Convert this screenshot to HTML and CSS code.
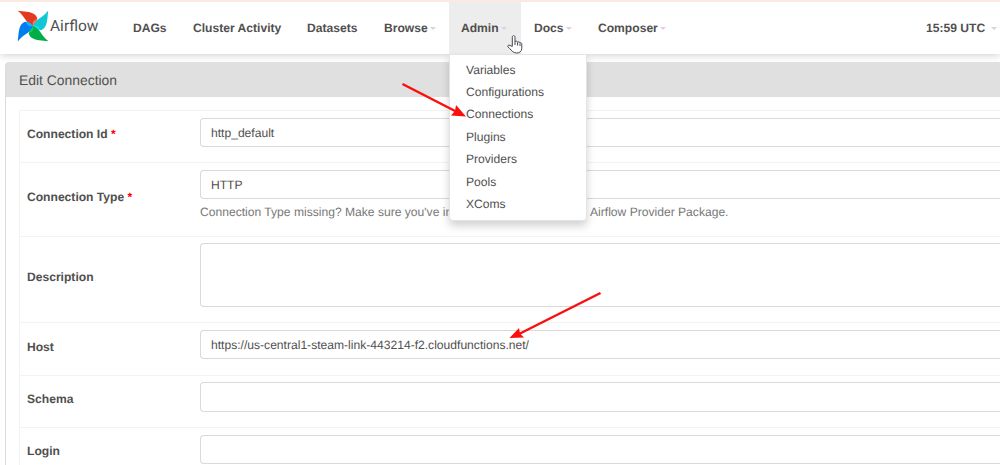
FILE: index.html
```html
<!DOCTYPE html>
<html lang="en">
<head>
<meta charset="utf-8">
<title>Edit Connection - Airflow</title>
<link rel="stylesheet" href="styles.css">
</head>
<body>
<header class="navbar">
  <a class="brand">
    <svg class="pinwheel" viewBox="0 0 32 32" width="32" height="32">
      <defs>
        <path id="blade" d="M.5 .8C7 1.500 13 1.500 17 4C19 5.300 20 7 20.300 9C18 11 17 13.500 16 16C12.500 14.500 10 12 8 9C6 6 4 3.200 .5 .8Z"/>
        <path id="fold" d="M16 16C14.800 12.500 16.500 10 20.300 9C20.500 12 18.500 14.500 16 16Z"/>
      </defs>
      <g><use href="#blade" fill="#e43921"/><use href="#fold" fill="#ff7557"/></g>
      <g transform="rotate(90 16 16)"><use href="#blade" fill="#11c7d4"/><use href="#fold" fill="#11e1ee"/></g>
      <g transform="rotate(180 16 16)"><use href="#blade" fill="#00ad46"/><use href="#fold" fill="#04d659"/></g>
      <g transform="rotate(270 16 16)"><use href="#blade" fill="#017cee"/><use href="#fold" fill="#0cb6ff"/></g>
    </svg>
    <span class="brand-name">Airflow</span>
  </a>
  <nav class="menu">
    <a class="item dags">DAGs</a>
    <a class="item cluster">Cluster Activity</a>
    <a class="item datasets">Datasets</a>
    <a class="item browse">Browse<i class="caret"></i></a>
    <div class="item admin">Admin<i class="caret"></i>
      <ul class="dropdown">
        <li>Variables</li><li>Configurations</li><li>Connections</li><li>Plugins</li><li>Providers</li><li>Pools</li><li>XComs</li>
      </ul>
    </div>
    <a class="item docs">Docs<i class="caret"></i></a>
    <a class="item composer">Composer<i class="caret"></i></a>
  </nav>
  <a class="item clock">15:59 UTC<i class="caret"></i></a>
</header>
<main class="panel">
  <h1 class="panel-title">Edit Connection</h1>
  <form class="form">
    <div class="row id-row"><label>Connection Id <b>*</b></label><div class="field">http_default</div></div>
    <div class="row type-row"><label>Connection Type <b>*</b></label><div><div class="field">HTTP</div><p class="help"><span class="help-start">Connection Type missing? Make sure you've in</span><span>Airflow Provider Package.</span></p></div></div>
    <div class="row description-row"><label>Description</label><div class="field"></div></div>
    <div class="row host-row"><label>Host</label><div class="field">https://us-central1-steam-link-443214-f2.cloudfunctions.net/</div></div>
    <div class="row schema-row"><label>Schema</label><div class="field"></div></div>
    <div class="row login-row"><label>Login</label><div class="field"></div></div>
  </form>
</main>
<svg class="annotations" viewBox="0 0 1000 465" width="1000" height="465">
  <g stroke="#fa0f0c" stroke-width="2.500" fill="none"><path d="M402.500 84L457 112"/><path d="M600.500 293L519 334"/></g>
  <g fill="#fa0f0c"><path d="M466 116.500L451 115.500L455 111L456 105Z"/><path d="M509.500 338L519 328L520 333.500L524 337.500Z"/></g>
  <path class="pointer" d="M512.300 46.500V37.200C512.300 35.100 515 35.100 515 37.200V42C515.500 40.700 517.500 40.900 517.600 42.400C518.200 41.500 519.900 41.800 520 43.100C520.700 42.300 521.800 42.900 521.800 44.200V48.200C521.800 51.500 519.500 53 516.700 53C513.300 53 511.500 50.500 509.800 48.700L507.900 46.800C507.300 45.300 508.900 44.700 510 45.400Z"/>
  <path class="pointer-lines" d="M515 42V45M517.600 42.500V45.500M520 43.500V46"/>
</svg>
</body>
</html>
```
FILE: styles.css
```css
* { box-sizing: border-box; }
body { margin: 0; width: 1000px; height: 465px; overflow: hidden; position: relative; background: #fff; color: #51504f; font: 12.1px/18px "Liberation Sans", Arial, sans-serif; text-rendering: geometricPrecision; }
.navbar { position: relative; z-index: 2; display: flex; height: 54px; border-top: 2px solid #fde9e4; background: #fff; box-shadow: 0 1px 8px rgba(0,0,0,.2); }
.brand { display: flex; width: 118px; padding: 8px 0 0 17px; }
.pinwheel { flex: none; }
.brand-name { margin: 6px 0 0 1px; font: 15.5px/20px Roboto, sans-serif; }
.menu { display: flex; }
.item { display: flex; height: 52px; padding: 0 0 0 15px; line-height: 52px; font-weight: bold; white-space: nowrap; }
.dags { width: 60px; }
.cluster { width: 114px; }
.datasets { width: 77px; }
.browse { width: 79.500px; }
.admin { position: relative; width: 72.500px; padding-left: 12.500px; background: #ededed; }
.docs { width: 62px; padding-left: 13px; }
.composer { width: 90px; }
.clock { margin-left: auto; width: 89px; }
.caret { width: 0; height: 0; margin: 25px 0 0 2px; border: 3px solid transparent; border-top-color: #e4cde4; border-bottom: 0; }
.clock .caret { margin-left: 6px; }
.dropdown { position: absolute; top: 51.500px; left: 0; width: 138px; height: 167px; margin: 0; padding: 4px 0 0 16.500px; list-style: none; border: 1px solid #e4e4e4; border-radius: 0 0 4px 4px; background: #fff; box-shadow: 0 5px 9px rgba(0,0,0,.18); font-weight: normal; line-height: 22.450px; }
.panel { margin: 8px 0 0 5px; height: 420px; border-left: 1px solid #dcdcdc; border-radius: 4px 0 0; }
.panel-title { height: 35px; margin: 0; padding-left: 13px; border-radius: 3px 0 0; background: #e0e0e0; font-size: 13.900px; line-height: 36px; font-weight: normal; }
.form { margin: 13px 0 0 13px; border-left: 1px solid #f3f3f3; }
.row { display: grid; grid-template-columns: 180px 1fr; border-top: 1px solid #f3f3f3; padding-top: 6.500px; }
.row label { align-self: center; padding: 0 0 11px 7px; font-weight: bold; }
.row b { color: #f00; }
.field { height: 29.500px; padding-left: 10px; border: 1px solid #d9d9d9; border-right: 0; border-radius: 4px 0 0 4px; line-height: 28px; }
.id-row { height: 52px; }
.type-row { height: 73.500px; }
.description-row { height: 86.500px; }
.description-row .field { height: 64px; }
.host-row { height: 52.500px; }
.schema-row { height: 52.500px; }
.login-row { height: 52px; }
.help { display: flex; margin: 3.500px 0 0; color: #777; white-space: nowrap; }
.help-start { width: 390px; overflow: hidden; }
.annotations { position: absolute; z-index: 3; top: 0; left: 0; }
.pointer { fill: #fff; stroke: #45474f; }
.pointer-lines { fill: none; stroke: #45474f; }
```
